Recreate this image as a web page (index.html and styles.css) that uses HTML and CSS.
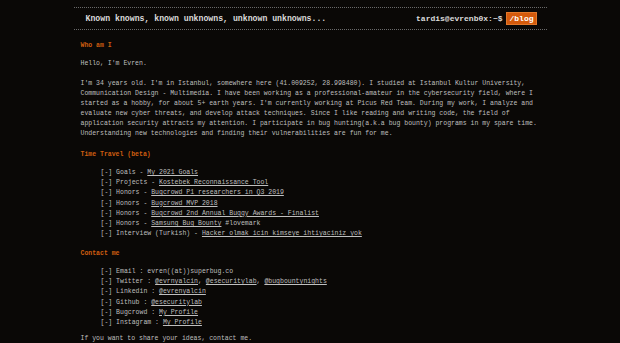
FILE: index.html
```html
<!DOCTYPE html>
<html>
<head>
<meta charset="utf-8">
<link rel="stylesheet" href="styles.css">
</head>
<body>
<div class="wrap">
  <header class="top">
    <div class="title">Known knowns, known unknowns, unknown unknowns...</div>
    <div class="prompt">tardis@evrenb0x:~$ <span class="badge">/blog</span></div>
  </header>
  <main class="content">
    <h2 class="h">Who am I</h2>
    <p class="p">Hello, I'm Evren.</p>
    <p class="p gap">I'm 34 years old. I'm in Istanbul, somewhere here (41.009252, 28.998480). I studied at Istanbul Kultur University,<br>Communication Design - Multimedia. I have been working as a professional-amateur in the cybersecurity field, where I<br>started as a hobby, for about 5+ earth years. I'm currently working at Picus Red Team. During my work, I analyze and<br>evaluate new cyber threats, and develop attack techniques. Since I like reading and writing code, the field of<br>application security attracts my attention. I participate in bug hunting(a.k.a bug bounty) programs in my spare time.<br>Understanding new technologies and finding their vulnerabilities are fun for me.</p>
    <h2 class="h">Time Travel (beta)</h2>
    <ul class="list">
      <li>[-] Goals - <a href="#">My 2021 Goals</a></li>
      <li>[-] Projects - <a href="#">Kostebek Reconnaissance Tool</a></li>
      <li>[-] Honors - <a href="#">Bugcrowd P1 researchers in Q3 2019</a></li>
      <li>[-] Honors - <a href="#">Bugcrowd MVP 2018</a></li>
      <li>[-] Honors - <a href="#">Bugcrowd 2nd Annual Buggy Awards - Finalist</a></li>
      <li>[-] Honors - <a href="#">Samsung Bug Bounty</a> #lovemark</li>
      <li>[-] Interview (Turkish) - <a href="#">Hacker olmak icin kimseye ihtiyaciniz yok</a></li>
    </ul>
    <h2 class="h">Contact me</h2>
    <ul class="list last">
      <li>[-] Email : evren((at))superbug.co</li>
      <li>[-] Twitter : <a href="#">@evrnyalcin</a>, <a href="#">@esecuritylab</a>, <a href="#">@bugbountynights</a></li>
      <li>[-] Linkedin : <a href="#">@evrenyalcin</a></li>
      <li>[-] Github : <a href="#">@esecuritylab</a></li>
      <li>[-] Bugcrowd : <a href="#">My Profile</a></li>
      <li>[-] Instagram : <a href="#">My Profile</a></li>
    </ul>
    <p class="p">If you want to share your ideas, contact me.</p>
  </main>
</div>
</body>
</html>
```

FILE: styles.css
```css
html, body {
  margin: 0;
  padding: 0;
  background: #0a0806;
}
body {
  font-family: "Liberation Mono", "Courier New", monospace;
  color: #bfbfbf;
}
.wrap {
  width: 473px;
  margin: 0 auto;
  padding-top: 7px;
}
.top {
  display: flex;
  align-items: center;
  justify-content: space-between;
  height: 21px;
  border-top: 1px dotted #6a6a6a;
  border-bottom: 1px dotted #6a6a6a;
  padding: 0 10px 0 12px;
}
.title {
  font-size: 8.2px;
  font-weight: bold;
  color: #dcdcdc;
}
.prompt {
  font-size: 8px;
  font-weight: bold;
  color: #dcdcdc;
  display: flex;
  align-items: center;
  gap: 1px;
}
.badge {
  display: inline-block;
  background: #d45a0c;
  color: #fff;
  padding: 1px 2px;
  border: 1px solid #e2782a;
  line-height: 9px;
  margin-left: 3px;
}
.content {
  padding: 11px 7px 0 7px;
  font-size: 6.5px;
  line-height: 10px;
}
.h {
  margin: 0 0 8px 0;
  font-size: 6.5px;
  font-weight: bold;
  color: #cf5e10;
  line-height: 10px;
}
.p {
  margin: 0 0 8px 0;
  white-space: nowrap;
}
.gap {
  margin-top: 10px;
  margin-bottom: 11px;
}
.list {
  list-style: none;
  margin: 0 0 9.5px 0;
  padding: 0 0 0 20px;
}
.list li {
  white-space: nowrap;
  line-height: 10.2px;
}
.list.last {
  margin-bottom: 6px;
}
.list a {
  color: #bfbfbf;
  text-decoration: underline;
}
```
